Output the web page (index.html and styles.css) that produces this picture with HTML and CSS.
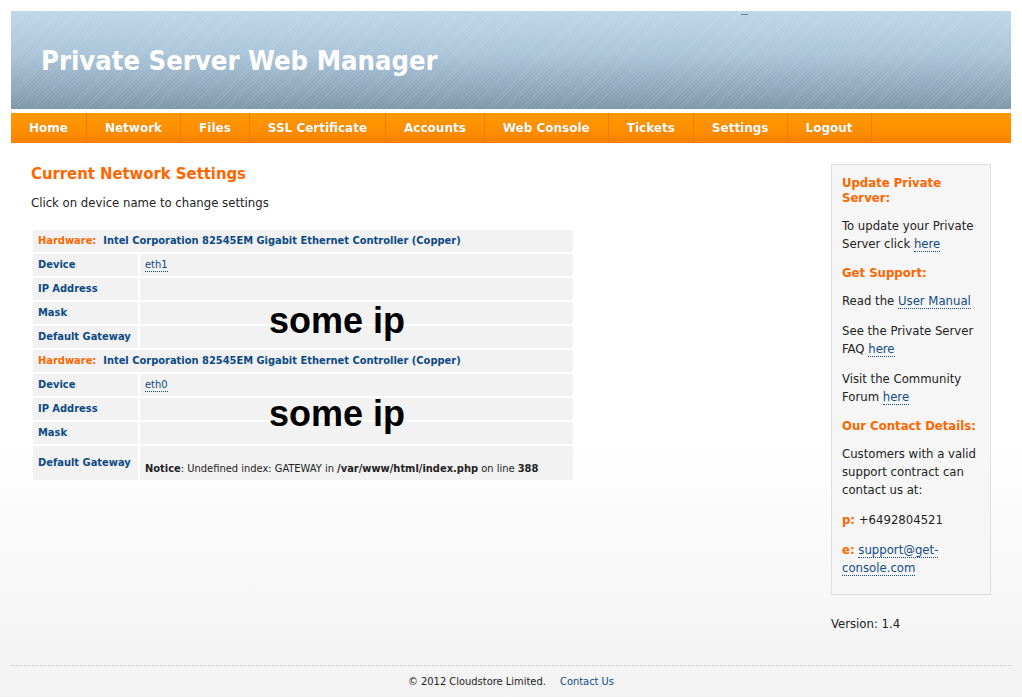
FILE: index.html
```html
<!DOCTYPE html>
<html>
<head>
<meta charset="utf-8">
<title>Private Server Web Manager</title>
<link rel="stylesheet" href="styles.css">
</head>
<body>
<div class="page">
  <div class="banner">
    <h1 class="title">Private Server Web Manager</h1>
    <span class="speck"></span>
  </div>
  <ul class="nav">
    <li><a href="#">Home</a></li>
    <li><a href="#">Network</a></li>
    <li><a href="#">Files</a></li>
    <li><a href="#">SSL Certificate</a></li>
    <li><a href="#">Accounts</a></li>
    <li><a href="#">Web Console</a></li>
    <li><a href="#">Tickets</a></li>
    <li><a href="#">Settings</a></li>
    <li><a href="#">Logout</a></li>
  </ul>
  <div class="content">
    <div class="main">
      <h2 class="heading">Current Network Settings</h2>
      <p class="intro">Click on device name to change settings</p>
      <div class="table-wrap">
        <table class="net">
          <tr><td colspan="2" class="hw"><span class="hw-label">Hardware:</span>&nbsp; Intel Corporation 82545EM Gigabit Ethernet Controller (Copper)</td></tr>
          <tr><td class="lbl">Device</td><td class="val"><a href="#" class="dev">eth1</a></td></tr>
          <tr><td class="lbl">IP Address</td><td class="val"></td></tr>
          <tr><td class="lbl">Mask</td><td class="val"></td></tr>
          <tr><td class="lbl">Default Gateway</td><td class="val"></td></tr>
          <tr><td colspan="2" class="hw"><span class="hw-label">Hardware:</span>&nbsp; Intel Corporation 82545EM Gigabit Ethernet Controller (Copper)</td></tr>
          <tr><td class="lbl">Device</td><td class="val"><a href="#" class="dev">eth0</a></td></tr>
          <tr><td class="lbl">IP Address</td><td class="val"></td></tr>
          <tr><td class="lbl">Mask</td><td class="val"></td></tr>
          <tr><td class="lbl">Default Gateway</td><td class="val notice-cell"><b>Notice</b>: Undefined index: GATEWAY in <b>/var/www/html/index.php</b> on line <b>388</b></td></tr>
        </table>
        <span class="overlay overlay-1">some ip</span>
        <span class="overlay overlay-2">some ip</span>
      </div>
    </div>
    <div class="side">
      <div class="box">
        <h3>Update Private Server:</h3>
        <p>To update your Private Server click <a href="#">here</a></p>
        <h3>Get Support:</h3>
        <p>Read the <a href="#">User Manual</a></p>
        <p>See the Private Server FAQ <a href="#">here</a></p>
        <p>Visit the Community Forum <a href="#">here</a></p>
        <h3>Our Contact Details:</h3>
        <p>Customers with a valid support contract can contact us at:</p>
        <p><b class="key">p:</b> +6492804521</p>
        <p><b class="key">e:</b> <a href="#">support@get-console.com</a></p>
      </div>
      <p class="version">Version: 1.4</p>
    </div>
  </div>
  <div class="footer">
    © 2012 Cloudstore Limited. <a href="#">Contact Us</a>
  </div>
</div>
</body>
</html>
```

FILE: styles.css
```css
html, body {
  margin: 0;
  padding: 0;
}
body {
  font-family: "DejaVu Sans Condensed", "DejaVu Sans", Verdana, sans-serif;
  font-stretch: condensed;
  font-size: 13px;
  color: #222;
  background: linear-gradient(to bottom, #ffffff 0px, #ffffff 440px, #f2f2f2 697px);
  min-height: 697px;
}
.page {
  width: 1000px;
  margin: 0 11px;
  padding-top: 11px;
}
.banner {
  position: relative;
  height: 98px;
  background:
    repeating-linear-gradient(135deg, rgba(255,255,255,0.10) 0px, rgba(255,255,255,0.10) 1px, rgba(0,0,0,0) 1px, rgba(0,0,0,0) 3px),
    linear-gradient(to bottom, #bdd7ea 0%, #a9c3d8 45%, #8aa3b8 85%, #7d96ab 100%);
  display: flex;
  align-items: center;
}
.title {
  margin: 0 0 0 30px;
  font-size: 27.2px;
  font-weight: bold;
  color: #fff;
}
.speck {
  position: absolute;
  left: 730px;
  top: 3px;
  width: 7px;
  height: 1px;
  background: #6d8598;
}
.nav {
  list-style: none;
  margin: 4px 0 0 0;
  padding: 0;
  height: 30px;
  display: flex;
  background: linear-gradient(to bottom, #ff9a00 0%, #ff8e00 60%, #ff8000 100%);
}
.nav li {
  border-right: 1px solid #f07a00;
  display: flex;
  align-items: center;
}
.nav a {
  display: block;
  padding: 0 18px;
  color: #fff;
  font-family: "DejaVu Sans", Verdana, sans-serif;
  font-stretch: normal;
  font-weight: bold;
  font-size: 12px;
  text-decoration: none;
  text-shadow: 0 0 1px rgba(150,70,0,0.5);
}
.content {
  display: flex;
  padding: 0 20px 0 20px;
}
.main {
  flex: 1;
}
.heading {
  margin: 21px 0 0 0;
  font-size: 16.5px;
  line-height: 20px;
  font-weight: bold;
  color: #ff6600;
}
.intro {
  margin: 10px 0 0 0;
  line-height: 18px;
}
.table-wrap {
  position: relative;
  margin-top: 16px;
  width: 544px;
}
.net {
  border-collapse: separate;
  border-spacing: 2px;
  width: 544px;
  font-size: 11px;
}
.net td {
  background: #f2f2f2;
  padding: 4px 5px;
  line-height: 14px;
  height: 14px;
}
.net .lbl {
  width: 95px;
  font-weight: bold;
  color: #0c4a82;
  vertical-align: middle;
  white-space: nowrap;
}
.net .hw {
  font-weight: bold;
  color: #0c4a82;
}
.hw-label {
  color: #ff6600;
}
.dev {
  color: #0c4a82;
  text-decoration: none;
  border-bottom: 1px dotted #0c4a82;
}
.net .notice-cell {
  padding-top: 16px;
  padding-bottom: 4px;
  color: #222;
  white-space: nowrap;
}
.overlay {
  position: absolute;
  font-family: "Liberation Sans", Arial, sans-serif;
  font-stretch: normal;
  font-weight: bold;
  font-size: 36px;
  color: #000;
  left: 238px;
  line-height: 40px;
}
.overlay-1 {
  top: 73px;
}
.overlay-2 {
  top: 166px;
}
.side {
  width: 160px;
  margin-top: 21px;
}
.box {
  background: #f6f6f6;
  border: 1px solid #dedede;
  padding: 10px 10px 5px 10px;
}
.box h3 {
  margin: 0 0 12px 0;
  font-size: 13px;
  line-height: 15px;
  color: #ff6600;
  font-weight: bold;
}
.box p {
  margin: 0 0 12px 0;
  line-height: 18px;
}
.box a {
  color: #114b82;
  text-decoration: none;
  border-bottom: 1px dotted #114b82;
}
.key {
  color: #ff6600;
}
.version {
  margin: 20px 0 0 0;
  line-height: 18px;
}
.footer {
  margin-top: 32px;
  border-top: 1px dotted #c8c8c8;
  text-align: center;
  font-size: 11px;
  padding-top: 9px;
  line-height: 14px;
}
.footer a {
  color: #114b82;
  text-decoration: none;
  margin-left: 11px;
}
```
